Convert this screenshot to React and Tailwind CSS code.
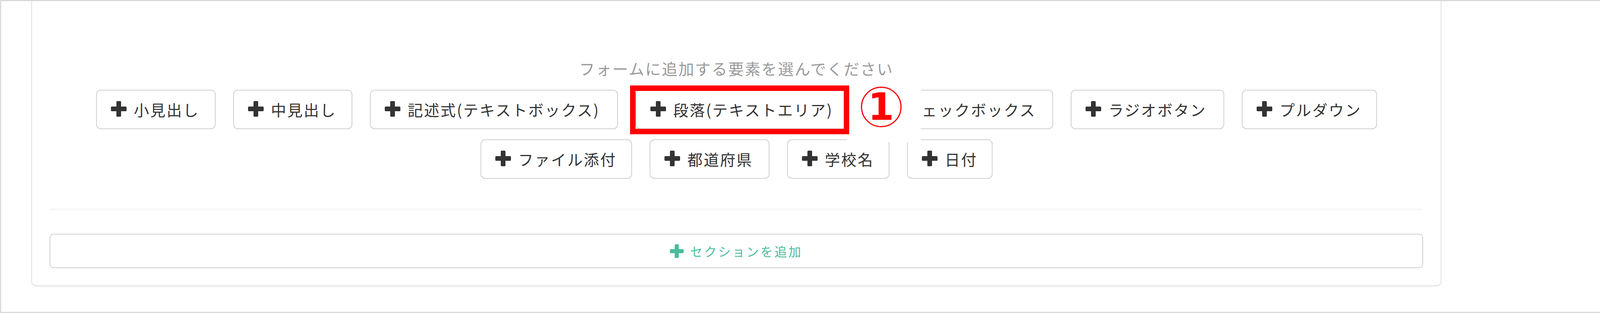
import React from "react";

function Plus({ color = "#333333", size = 40 }) {
  return (
    <svg width={size} height={size} viewBox="0 0 40 40" className="shrink-0">
      <rect x="14" y="0" width="12" height="40" rx="2.5" fill={color} />
      <rect x="0" y="14" width="40" height="12" rx="2.5" fill={color} />
    </svg>
  );
}

function Btn({ label, w, children }) {
  return (
    <div
      className={`relative flex h-[101px] shrink-0 items-center rounded-[12px] border-2 border-[#d0d0d0] bg-white pl-[36px] ${w}`}
    >
      <span className="-mt-[3px] flex">
        <Plus />
      </span>
      <span className="ml-[19px] whitespace-nowrap text-[39px] leading-none tracking-[3px] text-[#333333]">
        {label}
      </span>
      {children}
    </div>
  );
}

export default function App() {
  return (
    <div className="h-[802px] w-[4154px] overflow-hidden border-[3px] border-[#dadada] bg-white font-['Noto_Sans_CJK_JP','Noto_Sans',sans-serif]">
      <div className="ml-[77px] flex w-[3610px] flex-col rounded-b-[12px] border-x-2 border-b-2 border-[#e2e2e2] px-[45px] pb-[44px] pt-[147px] shadow-[0_2px_3px_rgba(0,0,0,0.06)]">
        <div className="h-[50px] text-center text-[40px] leading-[50px] tracking-[2.5px] text-[#9a9a9a]">
          フォームに追加する要素を選んでください
        </div>

        <div className="mt-[30px] flex flex-col gap-[26px]">
          <div className="flex justify-center gap-[45px]">
            <Btn label="小見出し" w="w-[306px]" />
            <Btn label="中見出し" w="w-[305px]" />
            <Btn label="記述式(テキストボックス)" w="w-[635px]" />
            <Btn label="段落(テキストエリア)" w="w-[549px]">
              <div className="absolute left-[-16px] top-[-13px] z-20 h-[125px] w-[561px] border-[14px] border-[#ff0000]" />
              <div className="absolute left-[539px] top-[-17px] z-10 h-[150px] w-[189px] bg-white pl-[36px] pt-[7px]">
                <div className="flex h-[104px] w-[104px] items-center justify-center rounded-full border-[3px] border-[#ff0000]">
                  <span className="font-['DejaVu_Sans',sans-serif] text-[96px] font-bold leading-none text-[#ff0000]">
                    1
                  </span>
                </div>
              </div>
            </Btn>
            <Btn label="チェックボックス" w="w-[475px]" />
            <Btn label="ラジオボタン" w="w-[393px]" />
            <Btn label="プルダウン" w="w-[346px]" />
          </div>
          <div className="flex justify-center gap-[45px]">
            <Btn label="ファイル添付" w="w-[388px]" />
            <Btn label="都道府県" w="w-[307px]" />
            <Btn label="学校名" w="w-[262px]" />
            <Btn label="日付" w="w-[219px]" />
          </div>
        </div>

        <div className="mt-[77px] h-[2px] bg-[#efefef]" />

        <div className="mt-[62px] flex h-[88px] items-center justify-center gap-[16px] rounded-[10px] border-2 border-[#cfcfcf] bg-white">
          <Plus color="#4abb9c" size={35} />
          <span className="whitespace-nowrap text-[32px] leading-none tracking-[4px] text-[#4abb9c]">
            セクションを追加
          </span>
        </div>
      </div>
    </div>
  );
}
